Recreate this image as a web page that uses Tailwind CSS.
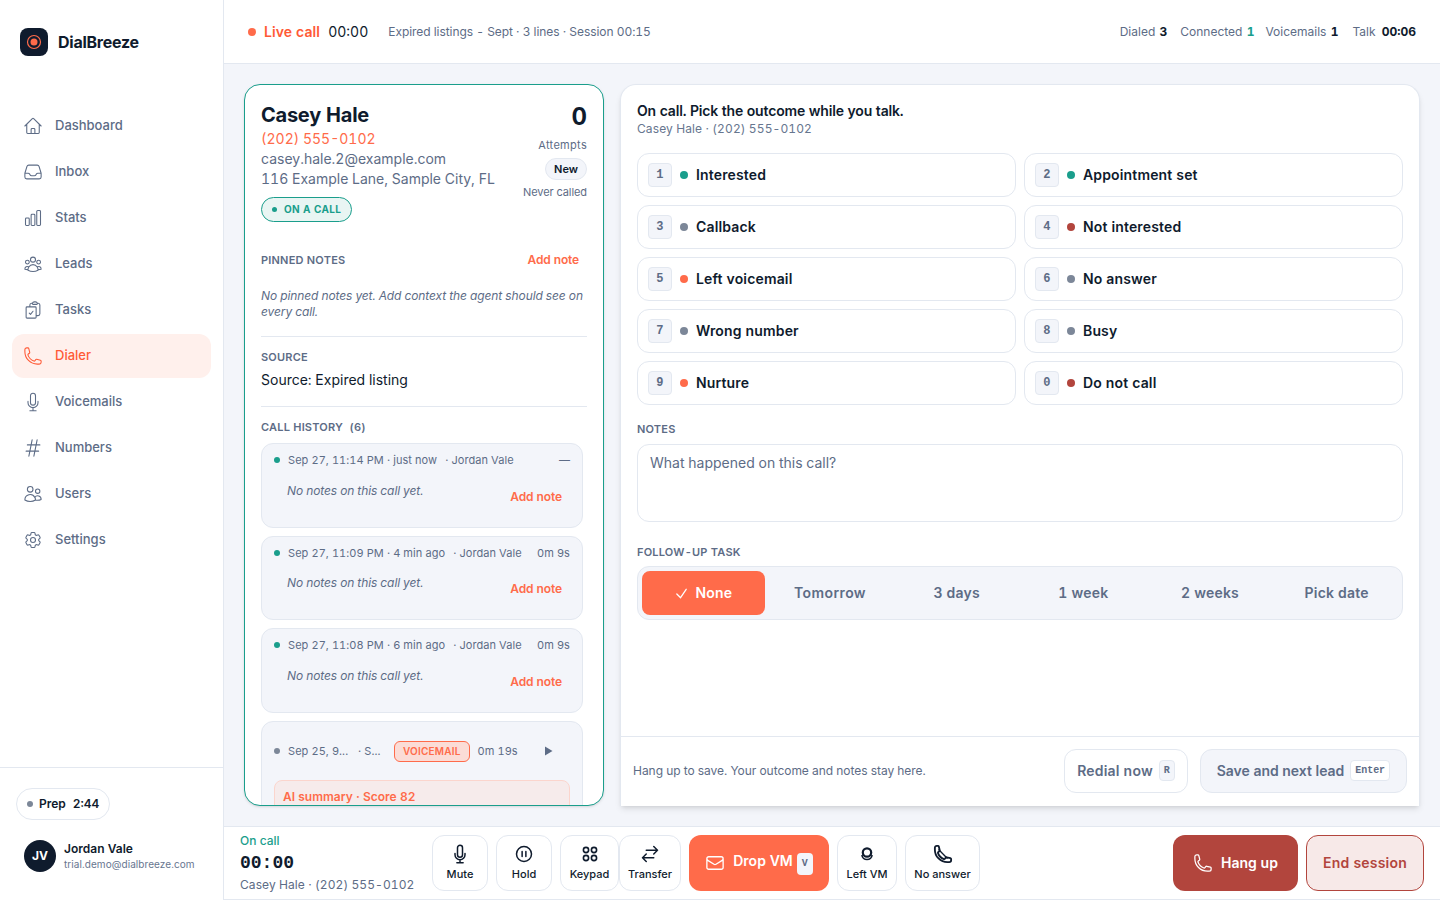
<!DOCTYPE html>
<html lang="en">
<head>
  <meta charset="UTF-8" />
  <title>Dialer | DialBreeze</title>
  <script src="https://cdn.jsdelivr.net/npm/@tailwindcss/browser@4"></script>
</head>
<body class="h-[900px] w-[1440px] overflow-hidden bg-white font-[Inter,sans-serif] text-[#0f1b2d] tabular-nums">
<div class="flex h-full">

  <!-- sidebar -->
  <aside class="flex w-[224px] shrink-0 flex-col border-r border-[#e3e8f0] bg-white">
    <div class="flex items-center gap-[10px] px-5 pt-7">
      <div class="flex h-7 w-7 items-center justify-center rounded-lg bg-[#0f1b2d]">
        <svg class="h-[18px] w-[18px]" viewBox="0 0 18 18" fill="none"><circle cx="9" cy="9" r="6.5" stroke="#ff6b4a" stroke-width="1.2"/><circle cx="9" cy="9" r="3.5" fill="#ff6b4a"/></svg>
      </div>
      <span class="text-base font-bold tracking-[-0.25px]">DialBreeze</span>
    </div>

    <nav class="mt-[48px] flex flex-col gap-[2px] px-3 text-[13px] font-medium text-[#5d6c86]">
      <a class="flex h-11 items-center gap-[12px] rounded-xl pl-[11px]">
        <svg class="h-5 w-5" viewBox="0 0 24 24" fill="none" stroke="currentColor" stroke-width="1.3"><path stroke-linecap="round" stroke-linejoin="round" d="m2.25 12 8.954-8.955c.44-.439 1.152-.439 1.591 0L21.75 12M4.5 9.75v10.125c0 .621.504 1.125 1.125 1.125H9.75v-4.875c0-.621.504-1.125 1.125-1.125h2.25c.621 0 1.125.504 1.125 1.125V21h4.125c.621 0 1.125-.504 1.125-1.125V9.75M8.25 21h8.25"/></svg>
        Dashboard</a>
      <a class="flex h-11 items-center gap-[12px] rounded-xl pl-[11px]">
        <svg class="h-5 w-5" viewBox="0 0 24 24" fill="none" stroke="currentColor" stroke-width="1.3"><path stroke-linecap="round" stroke-linejoin="round" d="M2.25 13.5h3.86a2.25 2.25 0 0 1 2.012 1.244l.256.512a2.25 2.25 0 0 0 2.013 1.244h3.218a2.25 2.25 0 0 0 2.013-1.244l.256-.512a2.25 2.25 0 0 1 2.013-1.244h3.859m-19.5.338V18a2.25 2.25 0 0 0 2.25 2.25h15A2.25 2.25 0 0 0 21.75 18v-4.162c0-.224-.034-.447-.1-.661L19.24 5.338a2.25 2.25 0 0 0-2.15-1.588H6.911a2.25 2.25 0 0 0-2.15 1.588L2.35 13.177a2.25 2.25 0 0 0-.1.661Z"/></svg>
        Inbox</a>
      <a class="flex h-11 items-center gap-[12px] rounded-xl pl-[11px]">
        <svg class="h-5 w-5" viewBox="0 0 24 24" fill="none" stroke="currentColor" stroke-width="1.3"><path stroke-linecap="round" stroke-linejoin="round" d="M3 13.125C3 12.504 3.504 12 4.125 12h2.25c.621 0 1.125.504 1.125 1.125v6.75C7.5 20.496 6.996 21 6.375 21h-2.25A1.125 1.125 0 0 1 3 19.875v-6.75ZM9.75 8.625c0-.621.504-1.125 1.125-1.125h2.25c.621 0 1.125.504 1.125 1.125v11.25c0 .621-.504 1.125-1.125 1.125h-2.25a1.125 1.125 0 0 1-1.125-1.125V8.625ZM16.5 4.125c0-.621.504-1.125 1.125-1.125h2.25C20.496 3 21 3.504 21 4.125v15.75c0 .621-.504 1.125-1.125 1.125h-2.25a1.125 1.125 0 0 1-1.125-1.125V4.125Z"/></svg>
        Stats</a>
      <a class="flex h-11 items-center gap-[12px] rounded-xl pl-[11px]">
        <svg class="h-5 w-5" viewBox="0 0 24 24" fill="none" stroke="currentColor" stroke-width="1.3"><path stroke-linecap="round" stroke-linejoin="round" d="M18 18.72a9.094 9.094 0 0 0 3.741-.479 3 3 0 0 0-4.682-2.72m.94 3.198.001.031c0 .225-.012.447-.037.666A11.944 11.944 0 0 1 12 21c-2.17 0-4.207-.576-5.963-1.584A6.062 6.062 0 0 1 6 18.719m12 0a5.971 5.971 0 0 0-.941-3.197m0 0A5.995 5.995 0 0 0 12 12.75a5.995 5.995 0 0 0-5.058 2.772m0 0a3 3 0 0 0-4.681 2.72 8.986 8.986 0 0 0 3.74.477m.94-3.197a5.971 5.971 0 0 0-.94 3.197M15 6.75a3 3 0 1 1-6 0 3 3 0 0 1 6 0Zm6 3a2.25 2.25 0 1 1-4.5 0 2.25 2.25 0 0 1 4.5 0Zm-13.5 0a2.25 2.25 0 1 1-4.5 0 2.25 2.25 0 0 1 4.5 0Z"/></svg>
        Leads</a>
      <a class="flex h-11 items-center gap-[12px] rounded-xl pl-[11px]">
        <svg class="h-5 w-5" viewBox="0 0 24 24" fill="none" stroke="currentColor" stroke-width="1.3"><path stroke-linecap="round" stroke-linejoin="round" d="M11.35 3.836c-.065.21-.1.433-.1.664 0 .414.336.75.75.75h4.5a.75.75 0 0 0 .75-.75 2.25 2.25 0 0 0-.1-.664m-5.8 0A2.251 2.251 0 0 1 13.5 2.25H15c1.012 0 1.867.668 2.15 1.586m-5.8 0c-.376.023-.75.05-1.124.08C9.095 4.01 8.25 4.973 8.25 6.108V8.25m8.9-4.414c.376.023.75.05 1.124.08 1.131.094 1.976 1.057 1.976 2.192V16.5A2.25 2.25 0 0 1 18 18.75h-2.25m-7.5-10.5H4.875c-.621 0-1.125.504-1.125 1.125v11.25c0 .621.504 1.125 1.125 1.125h9.75c.621 0 1.125-.504 1.125-1.125V18.75m-7.5-10.5h6.375c.621 0 1.125.504 1.125 1.125v9.375m-8.25-3 1.5 1.5 3-3.75"/></svg>
        Tasks</a>
      <a class="flex h-11 items-center gap-[12px] rounded-xl bg-[#fff0ec] pl-[11px] text-[#ff5a36]">
        <svg class="h-5 w-5" viewBox="0 0 24 24" fill="none" stroke="currentColor" stroke-width="1.3"><path stroke-linecap="round" stroke-linejoin="round" d="M2.25 6.75c0 8.284 6.716 15 15 15h2.25a2.25 2.25 0 0 0 2.25-2.25v-1.372c0-.516-.351-.966-.852-1.091l-4.423-1.106c-.44-.11-.902.055-1.173.417l-.97 1.293c-.282.376-.769.542-1.21.38a12.035 12.035 0 0 1-7.143-7.143c-.162-.441.004-.928.38-1.21l1.293-.97c.363-.271.527-.734.417-1.173L6.963 3.102a1.125 1.125 0 0 0-1.091-.852H4.5A2.25 2.25 0 0 0 2.25 4.5v2.25Z"/></svg>
        Dialer</a>
      <a class="flex h-11 items-center gap-[12px] rounded-xl pl-[11px]">
        <svg class="h-5 w-5" viewBox="0 0 24 24" fill="none" stroke="currentColor" stroke-width="1.3"><path stroke-linecap="round" stroke-linejoin="round" d="M12 18.75a6 6 0 0 0 6-6v-1.5m-6 7.5a6 6 0 0 1-6-6v-1.5m6 7.5v3.75m-3.75 0h7.5M12 15.75a3 3 0 0 1-3-3V4.5a3 3 0 1 1 6 0v8.25a3 3 0 0 1-3 3Z"/></svg>
        Voicemails</a>
      <a class="flex h-11 items-center gap-[12px] rounded-xl pl-[11px]">
        <svg class="h-5 w-5" viewBox="0 0 24 24" fill="none" stroke="currentColor" stroke-width="1.3"><path stroke-linecap="round" stroke-linejoin="round" d="M5.25 8.25h15m-16.5 7.5h15m-1.8-13.5-3.9 19.5m-2.1-19.5-3.9 19.5"/></svg>
        Numbers</a>
      <a class="flex h-11 items-center gap-[12px] rounded-xl pl-[11px]">
        <svg class="h-5 w-5" viewBox="0 0 24 24" fill="none" stroke="currentColor" stroke-width="1.3"><path stroke-linecap="round" stroke-linejoin="round" d="M15 19.128a9.38 9.38 0 0 0 2.625.372 9.337 9.337 0 0 0 4.121-.952 4.125 4.125 0 0 0-7.533-2.493M15 19.128v-.003c0-1.113-.285-2.16-.786-3.07M15 19.128v.106A12.318 12.318 0 0 1 8.624 21c-2.331 0-4.512-.645-6.374-1.766l-.001-.109a6.375 6.375 0 0 1 11.964-3.07M12 6.375a3.375 3.375 0 1 1-6.75 0 3.375 3.375 0 0 1 6.75 0Zm8.25 2.25a2.625 2.625 0 1 1-5.25 0 2.625 2.625 0 0 1 5.25 0Z"/></svg>
        Users</a>
      <a class="flex h-11 items-center gap-[12px] rounded-xl pl-[11px]">
        <svg class="h-5 w-5" viewBox="0 0 24 24" fill="none" stroke="currentColor" stroke-width="1.3"><path stroke-linecap="round" stroke-linejoin="round" d="M9.594 3.94c.09-.542.56-.94 1.11-.94h2.593c.55 0 1.02.398 1.11.94l.213 1.281c.063.374.313.686.645.87.074.04.147.083.22.127.325.196.72.257 1.075.124l1.217-.456a1.125 1.125 0 0 1 1.37.49l1.296 2.247a1.125 1.125 0 0 1-.26 1.431l-1.003.827c-.293.241-.438.613-.43.992a7.723 7.723 0 0 1 0 .255c-.008.378.137.75.43.991l1.004.827c.424.35.534.955.26 1.43l-1.298 2.247a1.125 1.125 0 0 1-1.369.491l-1.217-.456c-.355-.133-.75-.072-1.076.124a6.47 6.47 0 0 1-.22.128c-.331.183-.581.495-.644.869l-.213 1.281c-.09.543-.56.94-1.11.94h-2.594c-.55 0-1.019-.398-1.11-.94l-.213-1.281c-.062-.374-.312-.686-.644-.87a6.52 6.52 0 0 1-.22-.127c-.325-.196-.72-.257-1.076-.124l-1.217.456a1.125 1.125 0 0 1-1.369-.49l-1.297-2.247a1.125 1.125 0 0 1 .26-1.431l1.004-.827c.292-.24.437-.613.43-.991a6.932 6.932 0 0 1 0-.255c.007-.38-.138-.751-.43-.992l-1.004-.827a1.125 1.125 0 0 1-.26-1.43l1.297-2.247a1.125 1.125 0 0 1 1.37-.491l1.216.456c.356.133.751.072 1.076-.124.072-.044.146-.086.22-.128.332-.183.582-.495.644-.869l.214-1.28Z"/><path stroke-linecap="round" stroke-linejoin="round" d="M15 12a3 3 0 1 1-6 0 3 3 0 0 1 6 0Z"/></svg>
        Settings</a>
    </nav>

    <div class="mt-auto border-t border-[#e3e8f0] pb-[28px] pl-4 pt-5">
      <div class="inline-flex h-8 w-[94px] items-center gap-[6px] rounded-full border border-[#e3e8f0] pl-[10px] text-xs font-semibold">
        <span class="h-[6px] w-[6px] rounded-full bg-[#7c8798]"></span>
        <span>Prep</span><span class="ml-[1px]">2:44</span>
      </div>
      <div class="ml-2 mt-5 flex items-center gap-2">
        <div class="flex h-8 w-8 items-center justify-center rounded-full bg-[#0f1b2d] text-xs font-bold text-white">JV</div>
        <div>
          <div class="text-xs font-semibold leading-4">Jordan Vale</div>
          <div class="text-[10px] leading-[14px] tracking-[0.07px] text-[#67768f]">trial.demo@dialbreeze.com</div>
        </div>
      </div>
    </div>
  </aside>

  <div class="flex min-w-0 flex-1 flex-col">
    <!-- top bar -->
    <header class="flex h-[64px] shrink-0 items-center border-b border-[#e3e8f0] bg-white pl-6 pr-6">
      <span class="h-2 w-2 rounded-full bg-[#ff6b4a]"></span>
      <span class="ml-2 text-sm font-semibold tracking-[0.1px] text-[#ff5a36]">Live call</span>
      <span class="ml-2 text-sm">00:00</span>
      <span class="ml-5 text-xs tracking-[-0.05px] text-[#5d6c86]">Expired listings - Sept · 3 lines · Session 00:15</span>
      <div class="ml-auto flex text-xs text-[#5d6c86]">
        <span>Dialed <b class="ml-[1px] font-bold text-[#0f1b2d]">3</b></span>
        <span class="ml-[13px]">Connected <b class="ml-[1px] font-bold text-[#1a9e8c]">1</b></span>
        <span class="ml-[11px]">Voicemails <b class="ml-[1px] font-bold text-[#0f1b2d]">1</b></span>
        <span class="ml-[14px]">Talk <b class="ml-[3px] font-bold text-[#0f1b2d]">00:06</b></span>
      </div>
    </header>

    <main class="flex min-h-0 flex-1 gap-4 bg-[#f3f5fa] p-5">
      <!-- lead card -->
      <section class="h-[722px] w-[360px] shrink-0 overflow-hidden rounded-2xl border border-[#1a9e8c] bg-white pl-4 pr-4 pt-4 shadow-sm">
        <div class="flex justify-between">
          <div>
            <h2 class="text-xl font-bold leading-[28px] tracking-[-0.25px]">Casey Hale</h2>
            <div class="text-sm leading-[20px] text-[#ff6b4a]">(202) 555-0102</div>
            <div class="text-sm leading-[20px] text-[#5d6c86]">casey.hale.2@example.com</div>
            <div class="text-sm leading-[20px] text-[#5d6c86]">116 Example Lane, Sample City, FL</div>
            <div class="mt-2 inline-flex h-[25px] items-center gap-[7px] rounded-full border border-[#1a9e8c] bg-[#e9f5f3] px-[10px] text-[10px] font-bold tracking-[0.35px] text-[#1a9e8c]">
              <span class="h-[5px] w-[5px] rounded-full bg-[#1a9e8c]"></span>ON A CALL
            </div>
          </div>
          <div class="flex flex-col items-end">
            <div class="text-2xl font-bold leading-8">0</div>
            <div class="mt-[4px] text-[11px] leading-4 tracking-[0.3px] text-[#5d6c86]">Attempts</div>
            <div class="mt-[5px] flex h-[22px] items-center rounded-full border border-[#e3e8f0] bg-[#f3f5fa] px-[8px] text-[11px] font-semibold">New</div>
            <div class="mt-[4px] text-[11px] leading-4 tracking-[-0.08px] text-[#5d6c86]">Never called</div>
          </div>
        </div>

        <div class="mt-[30px] flex items-center justify-between pr-2">
          <span class="text-[11px] font-semibold tracking-[0.2px] text-[#5d6c86]">PINNED NOTES</span>
          <span class="text-xs font-semibold tracking-[-0.15px] text-[#ff6b4a]">Add note</span>
        </div>
        <p class="mt-[19px] text-xs italic leading-[16px] tracking-[-0.1px] text-[#5d6c86]">No pinned notes yet. Add context the agent should see on every call.</p>

        <div class="mt-[16px] border-t border-[#e3e8f0] pt-[12px]">
          <div class="text-[11px] font-semibold leading-4 tracking-[0.2px] text-[#5d6c86]">SOURCE</div>
          <div class="mt-[3px] text-sm leading-[24px]">Source: Expired listing</div>
        </div>

        <div class="mt-[14px] border-t border-[#e3e8f0] pt-[12px]">
          <div class="text-[11px] font-semibold leading-4 tracking-[0.2px] text-[#5d6c86]">CALL HISTORY&nbsp; (6)</div>
          <div class="mr-1 mt-2 flex flex-col gap-2">
            <div class="h-[85px] rounded-xl border border-[#e3e8f0] bg-[#f3f5fa] px-3 pt-[8px]">
              <div class="flex items-center text-[11px] leading-4 tracking-[0.07px] text-[#5d6c86]">
                <span class="mr-2 h-[6px] w-[6px] rounded-full bg-[#1a9e8c]"></span>
                <span>Sep 27, 11:14 PM · just now</span><span class="ml-[8px]">· Jordan Vale</span><span class="ml-auto">—</span>
              </div>
              <div class="flex justify-between pl-[13px] pr-[8px]">
                <span class="mt-[15px] text-xs italic leading-4 tracking-[-0.1px] text-[#5d6c86]">No notes on this call yet.</span>
                <span class="mt-[21px] text-xs font-semibold leading-4 tracking-[-0.1px] text-[#ff6b4a]">Add note</span>
              </div>
            </div>
            <div class="h-[84px] rounded-xl border border-[#e3e8f0] bg-[#f3f5fa] px-3 pt-[8px]">
              <div class="flex items-center text-[11px] leading-4 tracking-[0.07px] text-[#5d6c86]">
                <span class="mr-2 h-[6px] w-[6px] rounded-full bg-[#1a9e8c]"></span>
                <span>Sep 27, 11:09 PM · 4 min ago</span><span class="ml-[8px]">· Jordan Vale</span><span class="ml-auto">0m 9s</span>
              </div>
              <div class="flex justify-between pl-[13px] pr-[8px]">
                <span class="mt-[14px] text-xs italic leading-4 tracking-[-0.1px] text-[#5d6c86]">No notes on this call yet.</span>
                <span class="mt-[20px] text-xs font-semibold leading-4 tracking-[-0.1px] text-[#ff6b4a]">Add note</span>
              </div>
            </div>
            <div class="h-[85px] rounded-xl border border-[#e3e8f0] bg-[#f3f5fa] px-3 pt-[8px]">
              <div class="flex items-center text-[11px] leading-4 tracking-[0.07px] text-[#5d6c86]">
                <span class="mr-2 h-[6px] w-[6px] rounded-full bg-[#1a9e8c]"></span>
                <span>Sep 27, 11:08 PM · 6 min ago</span><span class="ml-[8px]">· Jordan Vale</span><span class="ml-auto">0m 9s</span>
              </div>
              <div class="flex justify-between pl-[13px] pr-[8px]">
                <span class="mt-[15px] text-xs italic leading-4 tracking-[-0.1px] text-[#5d6c86]">No notes on this call yet.</span>
                <span class="mt-[21px] text-xs font-semibold leading-4 tracking-[-0.1px] text-[#ff6b4a]">Add note</span>
              </div>
            </div>
            <div class="h-[120px] rounded-xl border border-[#e3e8f0] bg-[#f3f5fa] px-3 pt-[19px]">
              <div class="flex items-center whitespace-nowrap text-[11px] leading-4 tracking-[0.07px] text-[#5d6c86]">
                <span class="mr-2 h-[6px] w-[6px] rounded-full bg-[#7c8798]"></span>
                <span class="w-[60px]">Sep 25, 9...</span><span class="ml-[10px] w-[21px]">· S...</span>
                <span class="ml-[15px] flex h-[21px] items-center rounded-md border border-[#ff6b4a] bg-[#fbdcd6] px-[8px] text-[10px] font-semibold tracking-[0.2px] text-[#ff6b4a]">VOICEMAIL</span>
                <span class="ml-2">0m 19s</span>
                <svg class="ml-[26px] h-[10px] w-[9px]" viewBox="0 0 9 10" fill="#5d6c86"><path d="M1 0.500 8.500 5 1 9.500Z"/></svg>
              </div>
              <div class="mt-[18px] h-[60px] rounded-lg border border-[#fbd5cd] bg-[#f6ebeb] px-2 pt-2 text-xs font-semibold leading-4 text-[#ff6b4a]">AI summary · Score 82</div>
            </div>
          </div>
        </div>
      </section>

      <!-- outcome panel -->
      <section class="flex h-[722px] w-[800px] shrink-0 flex-col rounded-t-2xl border-x border-t border-[#e3e8f0] bg-white shadow-md">
        <div class="flex-1 px-4 pt-[18px]">
          <h3 class="text-sm font-semibold leading-4 tracking-[-0.15px]">On call. Pick the outcome while you talk.</h3>
          <p class="mt-[2px] text-xs leading-4 tracking-[0.1px] text-[#67768f]">Casey Hale · (202) 555-0102</p>

          <div class="mt-4 grid grid-cols-2 gap-2 text-sm font-semibold tracking-[0.15px]">
            <button class="flex h-11 items-center rounded-xl border border-[#e3e8f0] pl-[10px]"><kbd class="flex h-6 w-6 items-center justify-center rounded border border-[#e3e8f0] bg-[#f3f5fa] font-['Liberation_Mono',monospace] text-xs font-bold text-[#5d6c86]">1</kbd><span class="ml-2 h-2 w-2 rounded-full bg-[#1a9e8c]"></span><span class="ml-2">Interested</span></button>
            <button class="flex h-11 items-center rounded-xl border border-[#e3e8f0] pl-[10px]"><kbd class="flex h-6 w-6 items-center justify-center rounded border border-[#e3e8f0] bg-[#f3f5fa] font-['Liberation_Mono',monospace] text-xs font-bold text-[#5d6c86]">2</kbd><span class="ml-2 h-2 w-2 rounded-full bg-[#1a9e8c]"></span><span class="ml-2">Appointment set</span></button>
            <button class="flex h-11 items-center rounded-xl border border-[#e3e8f0] pl-[10px]"><kbd class="flex h-6 w-6 items-center justify-center rounded border border-[#e3e8f0] bg-[#f3f5fa] font-['Liberation_Mono',monospace] text-xs font-bold text-[#5d6c86]">3</kbd><span class="ml-2 h-2 w-2 rounded-full bg-[#7c8798]"></span><span class="ml-2">Callback</span></button>
            <button class="flex h-11 items-center rounded-xl border border-[#e3e8f0] pl-[10px]"><kbd class="flex h-6 w-6 items-center justify-center rounded border border-[#e3e8f0] bg-[#f3f5fa] font-['Liberation_Mono',monospace] text-xs font-bold text-[#5d6c86]">4</kbd><span class="ml-2 h-2 w-2 rounded-full bg-[#b2453d]"></span><span class="ml-2">Not interested</span></button>
            <button class="flex h-11 items-center rounded-xl border border-[#e3e8f0] pl-[10px]"><kbd class="flex h-6 w-6 items-center justify-center rounded border border-[#e3e8f0] bg-[#f3f5fa] font-['Liberation_Mono',monospace] text-xs font-bold text-[#5d6c86]">5</kbd><span class="ml-2 h-2 w-2 rounded-full bg-[#ff6b4a]"></span><span class="ml-2">Left voicemail</span></button>
            <button class="flex h-11 items-center rounded-xl border border-[#e3e8f0] pl-[10px]"><kbd class="flex h-6 w-6 items-center justify-center rounded border border-[#e3e8f0] bg-[#f3f5fa] font-['Liberation_Mono',monospace] text-xs font-bold text-[#5d6c86]">6</kbd><span class="ml-2 h-2 w-2 rounded-full bg-[#7c8798]"></span><span class="ml-2">No answer</span></button>
            <button class="flex h-11 items-center rounded-xl border border-[#e3e8f0] pl-[10px]"><kbd class="flex h-6 w-6 items-center justify-center rounded border border-[#e3e8f0] bg-[#f3f5fa] font-['Liberation_Mono',monospace] text-xs font-bold text-[#5d6c86]">7</kbd><span class="ml-2 h-2 w-2 rounded-full bg-[#7c8798]"></span><span class="ml-2">Wrong number</span></button>
            <button class="flex h-11 items-center rounded-xl border border-[#e3e8f0] pl-[10px]"><kbd class="flex h-6 w-6 items-center justify-center rounded border border-[#e3e8f0] bg-[#f3f5fa] font-['Liberation_Mono',monospace] text-xs font-bold text-[#5d6c86]">8</kbd><span class="ml-2 h-2 w-2 rounded-full bg-[#7c8798]"></span><span class="ml-2">Busy</span></button>
            <button class="flex h-11 items-center rounded-xl border border-[#e3e8f0] pl-[10px]"><kbd class="flex h-6 w-6 items-center justify-center rounded border border-[#e3e8f0] bg-[#f3f5fa] font-['Liberation_Mono',monospace] text-xs font-bold text-[#5d6c86]">9</kbd><span class="ml-2 h-2 w-2 rounded-full bg-[#ff6b4a]"></span><span class="ml-2">Nurture</span></button>
            <button class="flex h-11 items-center rounded-xl border border-[#e3e8f0] pl-[10px]"><kbd class="flex h-6 w-6 items-center justify-center rounded border border-[#e3e8f0] bg-[#f3f5fa] font-['Liberation_Mono',monospace] text-xs font-bold text-[#5d6c86]">0</kbd><span class="ml-2 h-2 w-2 rounded-full bg-[#b2453d]"></span><span class="ml-2">Do not call</span></button>
          </div>

          <div class="mt-[16px] text-[11px] font-semibold leading-4 tracking-[0.2px] text-[#5d6c86]">NOTES</div>
          <div class="mt-[7px] h-[78px] rounded-xl border border-[#e3e8f0] px-3 py-[8px] text-sm leading-5 text-[#5d6c86]">What happened on this call?</div>

          <div class="mt-[22px] text-[11px] font-semibold leading-4 tracking-[0.2px] text-[#5d6c86]">FOLLOW-UP TASK</div>
          <div class="mt-[6px] grid h-[54px] grid-cols-6 gap-1 rounded-xl border border-[#e3e8f0] bg-[#f3f5fa] p-1 text-sm font-semibold tracking-[0.2px] text-[#5d6c86]">
            <div class="flex items-center justify-center gap-[6px] rounded-lg bg-[#ff6b4a] text-white">
              <svg class="h-[15px] w-[15px]" viewBox="0 0 24 24" fill="none" stroke="currentColor" stroke-width="2"><path stroke-linecap="round" stroke-linejoin="round" d="m4.5 12.75 6 6 9-13.5"/></svg>None</div>
            <div class="flex items-center justify-center tracking-[0.4px]">Tomorrow</div>
            <div class="flex items-center justify-center">3 days</div>
            <div class="flex items-center justify-center">1 week</div>
            <div class="flex items-center justify-center">2 weeks</div>
            <div class="flex items-center justify-center">Pick date</div>
          </div>
        </div>

        <div class="flex h-[70px] shrink-0 items-center border-t border-[#e3e8f0] pb-[2px] pl-3 pr-3">
          <span class="text-xs tracking-[-0.04px] text-[#5d6c86]">Hang up to save. Your outcome and notes stay here.</span>
          <button class="ml-auto flex h-11 w-[124px] items-center justify-center gap-[6px] rounded-xl border border-[#e3e8f0] text-sm font-semibold tracking-[0.2px] text-[#5d6c86]">Redial now<kbd class="flex h-[21px] w-[16px] items-center justify-center rounded border border-[#e3e8f0] bg-[#f3f5fa] font-['Liberation_Mono',monospace] text-[10px] font-bold leading-none">R</kbd></button>
          <button class="ml-3 flex h-11 w-[207px] items-center justify-center gap-[6px] rounded-xl border border-[#e3e8f0] bg-[#f3f5fa] text-sm font-semibold tracking-[-0.05px] text-[#5d6c86]">Save and next lead<kbd class="flex h-[21px] w-[40px] items-center justify-center rounded border border-[#e3e8f0] bg-white font-['Liberation_Mono',monospace] text-[10px] font-bold leading-none">Enter</kbd></button>
        </div>
      </section>
    </main>

    <!-- call controls -->
    <footer class="flex h-[74px] shrink-0 items-center border-y border-[#e3e8f0] bg-white pl-4 pr-4">
      <div class="w-[192px] shrink-0">
        <div class="-mt-[1px] text-xs font-medium leading-4 text-[#1a9e8c]">On call</div>
        <div class="mt-[1px] font-['Liberation_Mono',monospace] text-lg font-bold leading-[26px]">00:00</div>
        <div class="mt-[1px] text-xs leading-4 tracking-[0.08px] text-[#5d6c86]">Casey Hale · (202) 555-0102</div>
      </div>
      <div class="flex text-[11px] font-medium">
        <button class="mr-2 flex h-14 w-14 flex-col items-center justify-center gap-[2px] rounded-xl border border-[#e3e8f0] pt-[1px]">
          <svg class="h-5 w-5" viewBox="0 0 24 24" fill="none" stroke="currentColor" stroke-width="1.8"><path stroke-linecap="round" stroke-linejoin="round" d="M12 18.75a6 6 0 0 0 6-6v-1.5m-6 7.5a6 6 0 0 1-6-6v-1.5m6 7.5v3.75m-3.75 0h7.5M12 15.75a3 3 0 0 1-3-3V4.5a3 3 0 1 1 6 0v8.25a3 3 0 0 1-3 3Z"/></svg>Mute</button>
        <button class="mr-2 flex h-14 w-14 flex-col items-center justify-center gap-[2px] rounded-xl border border-[#e3e8f0] pt-[1px]">
          <svg class="h-5 w-5" viewBox="0 0 24 24" fill="none" stroke="currentColor" stroke-width="1.8"><path stroke-linecap="round" stroke-linejoin="round" d="M14.25 9v6m-4.5 0V9M21 12a9 9 0 1 1-18 0 9 9 0 0 1 18 0Z"/></svg>Hold</button>
        <button class="flex h-14 w-[59px] flex-col items-center justify-center gap-[2px] rounded-xl border border-[#e3e8f0] pt-[1px]">
          <svg class="h-5 w-5" viewBox="0 0 20 20" fill="none" stroke="currentColor" stroke-width="1.6"><circle cx="6" cy="6" r="2.6"/><circle cx="14" cy="6" r="2.6"/><circle cx="6" cy="14" r="2.6"/><circle cx="14" cy="14" r="2.6"/></svg>Keypad</button>
        <button class="mr-2 flex h-14 w-[62px] flex-col items-center justify-center gap-[2px] rounded-xl border border-[#e3e8f0] pt-[1px]">
          <svg class="h-5 w-5" viewBox="0 0 24 24" fill="none" stroke="currentColor" stroke-width="1.8"><path stroke-linecap="round" stroke-linejoin="round" d="M7.5 21 3 16.5m0 0L7.5 12M3 16.5h13.5m0-13.5L21 7.5m0 0L16.5 12M21 7.5H7.5"/></svg>Transfer</button>
        <button class="mr-2 flex h-14 w-[140px] items-center justify-center gap-2 rounded-xl bg-[#ff6b4a] text-sm font-semibold text-white">
          <svg class="h-5 w-5" viewBox="0 0 24 24" fill="none" stroke="currentColor" stroke-width="1.6"><path stroke-linecap="round" stroke-linejoin="round" d="M21.75 6.75v10.5a2.25 2.25 0 0 1-2.25 2.25h-15a2.25 2.25 0 0 1-2.25-2.25V6.75m19.5 0A2.25 2.25 0 0 0 19.5 4.5h-15a2.25 2.25 0 0 0-2.25 2.25m19.5 0v.243a2.25 2.25 0 0 1-1.07 1.916l-7.5 4.615a2.25 2.25 0 0 1-2.36 0L3.32 8.91a2.25 2.25 0 0 1-1.07-1.916V6.75"/></svg>
          <span class="mt-[2px] flex items-center gap-1"><span class="mb-[6px]">Drop VM</span><kbd class="flex h-[22px] w-[16px] items-center justify-center rounded bg-[#f3f5fa] font-['Liberation_Mono',monospace] text-[10px] font-bold text-[#5d6c86]">V</kbd></span></button>
        <button class="mr-2 flex h-14 w-[60px] flex-col items-center justify-center gap-[2px] rounded-xl border border-[#e3e8f0] pt-[1px]">
          <svg class="h-5 w-5" viewBox="0 0 20 20" fill="none" stroke="currentColor" stroke-width="2.2"><circle cx="10" cy="8.500" r="4.200"/><path d="M5 11c0 3 2.500 4.500 5 4.500s5-1.500 5-4.500" stroke-width="1.600"/></svg>Left VM</button>
        <button class="flex h-14 w-[75px] flex-col items-center justify-center gap-[2px] rounded-xl border border-[#e3e8f0] pt-[1px]">
          <svg class="h-5 w-5" viewBox="0 0 24 24" fill="none" stroke="currentColor" stroke-width="2.200"><path stroke-linecap="round" stroke-linejoin="round" d="M2.25 6.75c0 8.284 6.716 15 15 15h2.25a2.25 2.25 0 0 0 2.25-2.25v-1.372c0-.516-.351-.966-.852-1.091l-4.423-1.106c-.44-.11-.902.055-1.173.417l-.97 1.293c-.282.376-.769.542-1.21.38a12.035 12.035 0 0 1-7.143-7.143c-.162-.441.004-.928.38-1.21l1.293-.97c.363-.271.527-.734.417-1.173L6.963 3.102a1.125 1.125 0 0 0-1.091-.852H4.5A2.25 2.25 0 0 0 2.25 4.5v2.25Z"/><path stroke-linecap="round" d="m7 7 10 10" stroke-width="1.600"/></svg>No answer</button>
      </div>
      <button class="ml-auto flex h-14 w-[125px] items-center justify-center gap-2 rounded-xl bg-[#b2453d] text-sm font-semibold text-white">
        <svg class="h-5 w-5" viewBox="0 0 24 24" fill="none" stroke="currentColor" stroke-width="1.5"><path stroke-linecap="round" stroke-linejoin="round" d="M2.25 6.75c0 8.284 6.716 15 15 15h2.25a2.25 2.25 0 0 0 2.25-2.25v-1.372c0-.516-.351-.966-.852-1.091l-4.423-1.106c-.44-.11-.902.055-1.173.417l-.97 1.293c-.282.376-.769.542-1.21.38a12.035 12.035 0 0 1-7.143-7.143c-.162-.441.004-.928.38-1.21l1.293-.97c.363-.271.527-.734.417-1.173L6.963 3.102a1.125 1.125 0 0 0-1.091-.852H4.5A2.25 2.25 0 0 0 2.25 4.5v2.25Z"/></svg>Hang up</button>
      <button class="ml-2 h-14 w-[118px] rounded-xl border border-[#b2453d] bg-[#f7e9e8] text-sm font-semibold tracking-[0.2px] text-[#b2453d]">End session</button>
    </footer>
  </div>
</div>
</body>
</html>
